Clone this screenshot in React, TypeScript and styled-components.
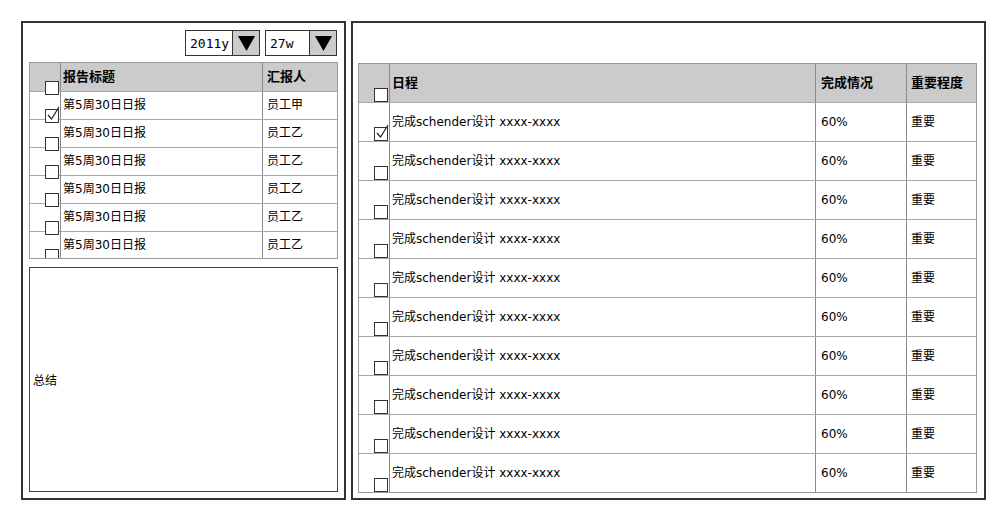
import React from "react";
import styled, { createGlobalStyle } from "styled-components";

const Global = createGlobalStyle`
  html, body { margin: 0; padding: 0; background: #fff; }
  body { font-family: "DejaVu Sans", "Noto Sans CJK SC", sans-serif; font-size: 12px; color: #111; }
`;

const Page = styled.div`
  display: flex;
  gap: 5px;
  padding: 21px 0 0 21px;
  width: 1005px;
  height: 520px;
  box-sizing: border-box;
`;

const LeftPanel = styled.div`
  width: 325px;
  height: 479px;
  box-sizing: border-box;
  border: 2px solid #333;
  padding: 7px 6px 6px 6px;
  display: flex;
  flex-direction: column;
`;

const RightPanel = styled.div`
  width: 635px;
  height: 479px;
  box-sizing: border-box;
  border: 2px solid #333;
  padding: 40px 7px 6px 5px;
  display: flex;
  flex-direction: column;
`;

const Toolbar = styled.div`
  display: flex;
  justify-content: flex-end;
  gap: 5px;
  height: 26px;
  margin-bottom: 6px;
  padding-right: 1px;
`;

const Select = styled.div<{ $w: number }>`
  width: ${(p) => p.$w}px;
  height: 26px;
  box-sizing: border-box;
  border: 1px solid #333;
  display: flex;
  background: #fff;
`;

const SelectText = styled.div`
  flex: 1;
  display: flex;
  align-items: center;
  padding-left: 4px;
  font-family: "DejaVu Sans Mono", monospace;
  font-size: 13px;
  color: #000;
`;

const SelectArrow = styled.div`
  width: 26px;
  background: #cbcbcb;
  border-left: 1px solid #333;
  display: flex;
  align-items: center;
  justify-content: center;
`;

const Table = styled.div<{ $h?: number }>`
  border: 1px solid #9a9a9a;
  ${(p) => (p.$h ? `height: ${p.$h}px; overflow: hidden;` : "")}
  box-sizing: border-box;
  display: flex;
  flex-direction: column;
`;

const Row = styled.div<{ $cols: string; $h: number; $head?: boolean }>`
  display: grid;
  grid-template-columns: ${(p) => p.$cols};
  height: ${(p) => p.$h}px;
  flex: none;
  box-sizing: border-box;
  background: ${(p) => (p.$head ? "#cbcbcb" : "#fff")};
  border-top: ${(p) => (p.$head ? "none" : "1px solid #a8a8a8")};
  font-weight: ${(p) => (p.$head ? "bold" : "normal")};
  font-size: ${(p) => (p.$head ? "13px" : "12px")};
`;

const Cell = styled.div<{ $pad: number }>`
  display: flex;
  align-items: center;
  padding-left: ${(p) => p.$pad}px;
  padding-bottom: 1px;
  border-left: 1px solid #8a8a8a;
  white-space: nowrap;
  overflow: hidden;
  line-height: 14px;
  color: #000;
`;

const CheckCell = styled.div`
  display: flex;
  align-items: flex-end;
  justify-content: flex-end;
  padding-right: 1px;
`;

const Box = styled.div<{ $drop: number }>`
  position: relative;
  width: 14px;
  height: 14px;
  box-sizing: border-box;
  border: 1.5px solid #333;
  background: #fff;
  margin-bottom: ${(p) => -p.$drop}px;
  flex: none;
`;

const Tick = styled.svg`
  position: absolute;
  left: 1px;
  top: -4px;
  overflow: visible;
`;

const Summary = styled.div`
  margin-top: 8px;
  flex: 1;
  border: 1.5px solid #444;
  display: flex;
  align-items: center;
  padding-left: 3px;
  color: #000;
`;

const Arrow = () => (
  <svg width="17" height="16" viewBox="0 0 17 16">
    <polygon points="0,1 17,1 8.5,16" fill="#000" />
  </svg>
);

const CheckBox = ({ checked, drop }: { checked?: boolean; drop: number }) => (
  <Box $drop={drop}>
    {checked && (
      <Tick width="13" height="14" viewBox="0 0 13 14">
        <path d="M1 9 L4.5 13 L12 1" fill="none" stroke="#222" strokeWidth="1.2" />
      </Tick>
    )}
  </Box>
);

const leftCols = "30px 202px 1fr";
const rightCols = "30px 426px 91px 1fr";

const leftRows = [
  { t: "第5周30日日报", p: "员工甲", c: true },
  { t: "第5周30日日报", p: "员工乙" },
  { t: "第5周30日日报", p: "员工乙" },
  { t: "第5周30日日报", p: "员工乙" },
  { t: "第5周30日日报", p: "员工乙" },
  { t: "第5周30日日报", p: "员工乙" },
];

const rightRows = Array.from({ length: 10 }, (_, i) => ({
  s: "完成schender设计 xxxx-xxxx",
  d: "60%",
  i: "重要",
  c: i === 0,
}));

export default function App() {
  return (
    <>
      <Global />
      <Page>
        <LeftPanel>
          <Toolbar>
            <Select $w={75}>
              <SelectText>2011y</SelectText>
              <SelectArrow>
                <Arrow />
              </SelectArrow>
            </Select>
            <Select $w={72}>
              <SelectText>27w</SelectText>
              <SelectArrow>
                <Arrow />
              </SelectArrow>
            </Select>
          </Toolbar>
          <Table $h={197}>
            <Row $cols={leftCols} $h={28} $head>
              <CheckCell>
                <CheckBox drop={4} />
              </CheckCell>
              <Cell $pad={2}>报告标题</Cell>
              <Cell $pad={4}>汇报人</Cell>
            </Row>
            {leftRows.map((r, i) => (
              <Row key={i} $cols={leftCols} $h={28}>
                <CheckCell>
                  <CheckBox checked={r.c} drop={4} />
                </CheckCell>
                <Cell $pad={2}>{r.t}</Cell>
                <Cell $pad={4}>{r.p}</Cell>
              </Row>
            ))}
          </Table>
          <Summary>总结</Summary>
        </LeftPanel>
        <RightPanel>
          <Table>
            <Row $cols={rightCols} $h={38} $head>
              <CheckCell>
                <CheckBox drop={0} />
              </CheckCell>
              <Cell $pad={2}>日程</Cell>
              <Cell $pad={5}>完成情况</Cell>
              <Cell $pad={4}>重要程度</Cell>
            </Row>
            {rightRows.map((r, i) => (
              <Row key={i} $cols={rightCols} $h={39}>
                <CheckCell>
                  <CheckBox checked={r.c} drop={0} />
                </CheckCell>
                <Cell $pad={2}>{r.s}</Cell>
                <Cell $pad={5}>{r.d}</Cell>
                <Cell $pad={4}>{r.i}</Cell>
              </Row>
            ))}
          </Table>
        </RightPanel>
      </Page>
    </>
  );
}
